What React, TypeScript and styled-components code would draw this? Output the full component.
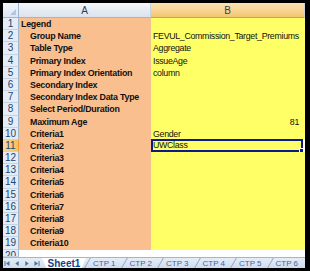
import React from "react"
import styled, { createGlobalStyle } from "styled-components"

const GlobalStyle = createGlobalStyle`
  html, body {
    margin: 0;
    padding: 0;
    background: #000;
  }
`

const FONT = `"Liberation Sans", Arial, sans-serif`
const PEACH = "#f9bf8f"
const YELLOW = "#ffff66"
const NAVY = "#0c1a8a"
const ROW_H = 12.2

const Frame = styled.div`
  background: #000;
  box-sizing: border-box;
  display: flex;
  flex-direction: column;
  height: 271px;
  padding: 3px 5px 3px 3px;
  width: 310px;
`
const Sheet = styled.div`
  background: #fff;
  display: grid;
  flex: 1;
  grid-template-columns: 16px 132px minmax(0, 1fr);
  grid-template-rows: 15px repeat(19, ${ROW_H}px) minmax(0, 1fr);
  min-height: 0;
  overflow: hidden;
`
const Corner = styled.div`
  background: linear-gradient(#f3f6fb, #dce6f3);
  border-bottom: 1px solid #9eb6ce;
  border-right: 1px solid #9eb6ce;
  box-sizing: border-box;
  position: relative;

  &::after {
    border-bottom: 6px solid #b5c6dc;
    border-left: 6px solid transparent;
    bottom: 2px;
    content: "";
    position: absolute;
    right: 2px;
  }
`
const ColHead = styled.div<{ $active?: boolean }>`
  align-items: center;
  background: ${({ $active }) =>
    $active
      ? "linear-gradient(#fbe3b4, #f8d38f 60%, #f3c46b)"
      : "linear-gradient(#f6f8fb, #e4eaf3 60%, #dbe3ee)"};
  border-bottom: 1px solid ${({ $active }) => ($active ? "#f29536" : "#9eb6ce")};
  border-right: 1px solid #c5d3e3;
  box-sizing: border-box;
  color: #27415f;
  display: flex;
  font-family: ${FONT};
  font-size: 10px;
  justify-content: center;
`
const RowHead = styled.div<{ $active?: boolean }>`
  background: ${({ $active }) =>
    $active ? "linear-gradient(90deg, #f9d99f, #f1c15f)" : "#e4ecf7"};
  border-bottom: 1px solid #c5d3e3;
  border-right: 1px solid ${({ $active }) => ($active ? "#f29536" : "#9eb6ce")};
  box-sizing: border-box;
  color: #23466f;
  font-family: ${FONT};
  font-size: 10px;
  line-height: 11.5px;
  overflow: hidden;
  text-align: center;
`
const Cell = styled.div<{
  $fill?: string
  $bold?: boolean
  $indent?: number
  $right?: boolean
  $selected?: boolean
}>`
  background: ${({ $fill }) => $fill || "#fff"};
  box-sizing: border-box;
  color: #111;
  font-family: ${FONT};
  font-size: ${({ $bold }) => ($bold ? "8.9px" : "8.8px")};
  font-weight: ${({ $bold }) => ($bold ? 700 : 400)};
  letter-spacing: ${({ $bold }) => ($bold ? "-0.25px" : "-0.3px")};
  line-height: ${ROW_H}px;
  min-width: 0;
  padding: 0 ${({ $right }) => ($right ? "6px" : "2px")} 0
    ${({ $indent }) => 2 + ($indent || 0)}px;
  position: relative;
  text-align: ${({ $right }) => ($right ? "right" : "left")};
  white-space: nowrap;
  ${({ $selected }) =>
    $selected &&
    `
    border: 2px solid ${NAVY};
    border-right-width: 2px;
    line-height: ${ROW_H - 3}px;
    padding-left: 0;
    margin-top: -1px;
    margin-right: 2px;
    height: ${ROW_H + 1}px;
  `}
`
const FillHandle = styled.span`
  background: ${NAVY};
  border: 1px solid #fff;
  bottom: -3px;
  height: 3px;
  position: absolute;
  right: -3px;
  width: 3px;
`
const TabBar = styled.div`
  background: linear-gradient(#e6edf7, #cfdcee);
  border-top: 1px solid #9eb6ce;
  box-sizing: border-box;
  display: flex;
  height: 11px;
  overflow: hidden;
`
const NavGroup = styled.div`
  align-items: center;
  display: flex;
  gap: 4px;
  height: 100%;
  padding: 0 0 0 1px;
  width: 43px;
`
const NavArrow = styled.svg`
  display: block;
  fill: #4d6f9a;
  height: 5px;
  width: 6px;
`
const Tab = styled.div<{ $active?: boolean }>`
  align-items: center;
  background: ${({ $active }) => ($active ? "#fff" : "transparent")};
  clip-path: ${({ $active }) =>
    $active ? "polygon(0 0, 100% 0, 90% 100%, 10% 100%)" : "none"};
  color: ${({ $active }) => ($active ? "#15428b" : "#3d66a3")};
  display: flex;
  flex: none;
  font-family: ${FONT};
  font-size: ${({ $active }) => ($active ? "10px" : "8px")};
  font-weight: ${({ $active }) => ($active ? 700 : 400)};
  height: 100%;
  justify-content: center;
  position: relative;
  width: ${({ $active }) => ($active ? "44px" : "36.5px")};

  &::before {
    border-left: 1px solid #8da4c4;
    content: "";
    display: ${({ $active }) => ($active ? "none" : "block")};
    height: 10px;
    left: 1px;
    position: absolute;
    top: 0;
    transform: skewX(-30deg);
  }
`

type Row = { label: string; indent?: number; value?: string; right?: boolean }

const rows: Row[] = [
  { label: "Legend", indent: 0 },
  { label: "Group Name", indent: 9, value: "FEVUL_Commission_Target_Premiums" },
  { label: "Table Type", indent: 9, value: "Aggregate" },
  { label: "Primary Index", indent: 9, value: "IssueAge" },
  { label: "Primary Index Orientation", indent: 9, value: "column" },
  { label: "Secondary Index", indent: 9 },
  { label: "Secondary Index Data Type", indent: 9 },
  { label: "Select Period/Duration", indent: 9 },
  { label: "Maximum Age", indent: 9, value: "81", right: true },
  { label: "Criteria1", indent: 9, value: "Gender" },
  { label: "Criteria2", indent: 9, value: "UWClass" },
  { label: "Criteria3", indent: 9 },
  { label: "Criteria4", indent: 9 },
  { label: "Criteria5", indent: 9 },
  { label: "Criteria6", indent: 9 },
  { label: "Criteria7", indent: 9 },
  { label: "Criteria8", indent: 9 },
  { label: "Criteria9", indent: 9 },
  { label: "Criteria10", indent: 9 },
]

const SELECTED_ROW = 11
const tabs = ["CTP 1", "CTP 2", "CTP 3", "CTP 4", "CTP 5", "CTP 6"]

const arrows = [
  "M0 0h1.2v6H0z M6 0v6L1.8 3z",
  "M5 0v6L1 3z",
  "M1 0v6l4-3z",
  "M0 0v6l4.2-3z M4.8 0H6v6H4.8z",
]

const App = () => {
  return (
    <>
      <GlobalStyle />
      <Frame>
        <Sheet>
          <Corner />
          <ColHead>A</ColHead>
          <ColHead $active>B</ColHead>
          {rows.map((row, i) => {
            const n = i + 1
            const selected = n === SELECTED_ROW
            return (
              <React.Fragment key={n}>
                <RowHead $active={selected}>{n}</RowHead>
                <Cell $fill={PEACH} $bold $indent={row.indent}>
                  {row.label}
                </Cell>
                <Cell $fill={YELLOW} $right={row.right} $selected={selected}>
                  {row.value}
                  {selected && <FillHandle />}
                </Cell>
              </React.Fragment>
            )
          })}
          <RowHead>20</RowHead>
          <Cell />
          <Cell />
        </Sheet>
        <TabBar>
          <NavGroup>
            {arrows.map(d => (
              <NavArrow key={d} viewBox="0 0 6 6">
                <path d={d} />
              </NavArrow>
            ))}
          </NavGroup>
          <Tab $active>Sheet1</Tab>
          {tabs.map(t => (
            <Tab key={t}>{t}</Tab>
          ))}
        </TabBar>
      </Frame>
    </>
  )
}

export default App
